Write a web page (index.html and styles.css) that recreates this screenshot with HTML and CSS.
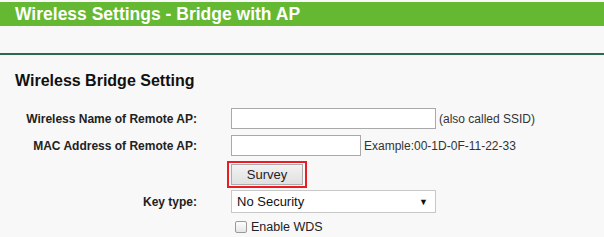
FILE: index.html
```html
<!DOCTYPE html>
<html>
<head>
    <meta charset="utf-8">
    <title>Wireless Settings</title>
    <link rel="stylesheet" href="styles.css">
</head>
<body>
    <div class="page-title">Wireless Settings - Bridge with AP</div>
    <div class="title-rule"></div>

    <div class="section-title">Wireless Bridge Setting</div>

    <div class="form">
        <div class="row">
            <div class="label">Wireless Name of Remote AP:</div>
            <div class="value">
                <input type="text" class="input-ssid">
                <span class="hint">(also called SSID)</span>
            </div>
        </div>
        <div class="row">
            <div class="label">MAC Address of Remote AP:</div>
            <div class="value">
                <input type="text" class="input-mac">
                <span class="hint">Example:00-1D-0F-11-22-33</span>
            </div>
        </div>
        <div class="row row-survey">
            <div class="label"></div>
            <div class="value">
                <div class="survey-frame">
                    <button class="btn-survey">Survey</button>
                </div>
            </div>
        </div>
        <div class="row row-key">
            <div class="label">Key type:</div>
            <div class="value">
                <div class="select-box">
                    <span>No Security</span>
                    <span class="arrow">&#9660;</span>
                </div>
            </div>
        </div>
        <div class="row row-wds">
            <div class="label"></div>
            <div class="value">
                <span class="check"></span>
                <span class="check-text">Enable WDS</span>
            </div>
        </div>
    </div>
</body>
</html>
```

FILE: styles.css
```css
body {
  margin: 0;
  padding-top: 2px;
  background-color: #f8f8f8;
  font-family: "Liberation Sans", Arial, sans-serif;
  color: #222;
  overflow: hidden;
}

.page-title {
  height: 24px;
  line-height: 24px;
  background-color: #65b832;
  color: #fff;
  font-size: 17.5px;
  font-weight: bold;
  padding-left: 15px;
}

.title-rule {
  margin-top: 27px;
  height: 2px;
  background-color: #2d6a4c;
}

.section-title {
  margin-top: 17px;
  padding-left: 15px;
  font-size: 16px;
  font-weight: bold;
  color: #111;
}

.form {
  margin-top: 15px;
}

.row {
  display: flex;
  align-items: center;
  height: 27px;
}

.label {
  width: 197px;
  text-align: right;
  font-size: 12px;
  font-weight: bold;
  color: #222;
}

.value {
  display: flex;
  align-items: center;
  margin-left: 34px;
  font-size: 12px;
}

input[type="text"] {
  box-sizing: border-box;
  height: 21px;
  margin: 0;
  border: 1px solid #a9a9a9;
  background: #fff;
}

.input-ssid {
  width: 205px;
}

.input-mac {
  width: 130px;
}

.hint {
  margin-left: 3px;
  color: #333;
}

.row-survey {
  height: 30px;
}

.survey-frame {
  margin-left: -4px;
  border: 2px solid #ec1c24;
  padding: 1px 2px;
}

.btn-survey {
  display: block;
  width: 72px;
  height: 21px;
  border: 1px solid #acacac;
  background: linear-gradient(#f2f2f2, #e0e0e0);
  font-family: "Liberation Sans", Arial, sans-serif;
  font-size: 13px;
  color: #222;
  padding: 0;
}

.row-key {
  height: 25px;
}

.select-box {
  box-sizing: border-box;
  display: flex;
  align-items: center;
  justify-content: space-between;
  width: 205px;
  height: 23px;
  padding: 0 7px 0 5px;
  border: 1px solid #c8c8c8;
  background: #fff;
  font-size: 13px;
  color: #111;
}

.arrow {
  font-size: 9px;
}

.row-wds {
  height: 25px;
}

.check {
  box-sizing: border-box;
  width: 12px;
  height: 12px;
  margin-left: 4px;
  border: 1px solid #9a9a9a;
  border-radius: 2px;
  background: linear-gradient(#fdfdfd, #e6e6e6);
}

.check-text {
  margin-left: 4px;
  font-size: 12.5px;
  color: #222;
}
```
